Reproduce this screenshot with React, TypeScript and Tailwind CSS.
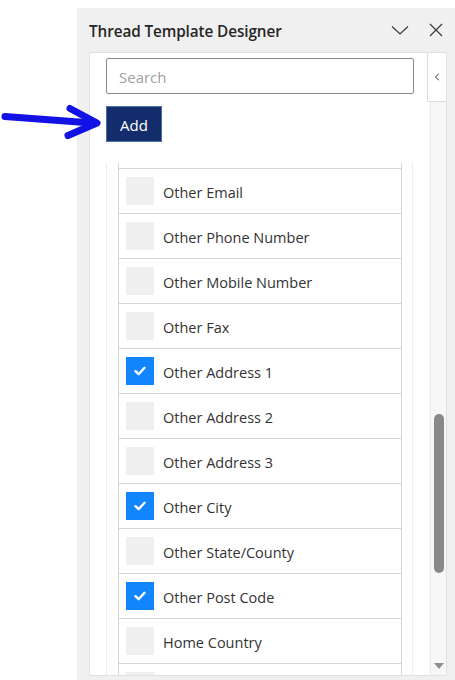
import { ChevronLeft } from "lucide-react"

const fields = [
    { label: "Other Email", checked: false },
    { label: "Other Phone Number", checked: false },
    { label: "Other Mobile Number", checked: false },
    { label: "Other Fax", checked: false },
    { label: "Other Address 1", checked: true },
    { label: "Other Address 2", checked: false },
    { label: "Other Address 3", checked: false },
    { label: "Other City", checked: true },
    { label: "Other State/County", checked: false },
    { label: "Other Post Code", checked: true },
    { label: "Home Country", checked: false },
]

const CheckBox = ({ checked }: { checked: boolean }) => (
    <div className={checked ? "w-[28px] h-[28px] bg-[#1185fc] grid place-items-center shrink-0" : "w-[28px] h-[28px] bg-[#efefef] shrink-0"}>
        {checked && (
            <svg width="12" height="10" viewBox="0 0 12 10">
                <path d="M1.5 5.2 L4.6 8.2 L10.5 1.8" fill="none" stroke="white" strokeWidth="2.4" strokeLinecap="round" strokeLinejoin="round" />
            </svg>
        )}
    </div>
)

const FieldRow = ({ label, checked }: { label?: string, checked: boolean }) => (
    <div className="h-[45px] border-b border-[#d6d6d6] flex items-center pl-[7px] gap-[9px]">
        <CheckBox checked={checked} />
        {label && <span className="pt-[3px] text-[14.5px] text-[#333333]">{label}</span>}
    </div>
)

const PointerArrow = () => (
    <svg className="absolute left-0 top-[100px]" width="110" height="46" viewBox="0 100 110 46">
        <path d="M5 116.5 L92 123" fill="none" stroke="#1212e6" strokeWidth="7" strokeLinecap="round" />
        <path d="M70 108.5 L97 123 L68 135.5" fill="none" stroke="#1212e6" strokeWidth="7" strokeLinecap="round" strokeLinejoin="round" />
    </svg>
)

export default function App() {
    return (
        <div className="relative w-[455px] h-[680px] bg-white overflow-hidden flex" style={{ fontFamily: '"Open Sans", "Noto Sans", sans-serif' }}>
            <div className="w-[77px] shrink-0" />
            <div className="flex-1 mt-[8px] bg-[#f0f0f0] flex flex-col">
                {/* header */}
                <div className="h-[44px] shrink-0 flex items-center pl-[12px] pr-[12px]">
                    <h4 className="flex-1 pt-[3px] text-[15.3px] font-semibold text-[#262626] tracking-[-0.1px]">Thread Template Designer</h4>
                    <svg className="mr-[20px]" width="18" height="10" viewBox="0 0 18 10">
                        <path d="M1 1.5 L9 9 L17 1.5" fill="none" stroke="#3a3a3a" strokeWidth="1.2" />
                    </svg>
                    <svg width="14" height="14" viewBox="0 0 14 14">
                        <path d="M1 1 L13 13 M13 1 L1 13" fill="none" stroke="#3a3a3a" strokeWidth="1.2" />
                    </svg>
                </div>

                {/* content */}
                <div className="relative ml-[12px] w-[358px] h-[624px] border border-[#e1e1e1] bg-white flex overflow-hidden">
                    <div className="w-[16px] shrink-0" />
                    <div className="w-[307px] shrink-0 flex flex-col">
                        <div className="pt-[5px] bg-white">
                            <input
                                placeholder="Search"
                                className="w-[308px] h-[36px] border border-[#8a8a8a] rounded-[2px] px-[12px] pt-[2px] text-[15px] placeholder:text-[#a0a0a0] outline-none"
                            />
                            <div className="mt-[12px] h-[57px]">
                                <button type="button" className="h-[36px] w-[56px] pt-[2px] bg-[#132c6b] border border-[#4a6fa5] text-white text-[15px]">Add</button>
                            </div>
                        </div>
                        <div className="flex-1 border-x border-[#efefef] pl-[11px] pr-[10px]">
                            <div className="border-x border-[#d6d6d6]">
                                <div className="h-[6px] border-b border-[#d6d6d6]" />
                                {fields.map((f) => (
                                    <FieldRow key={f.label} label={f.label} checked={f.checked} />
                                ))}
                                <FieldRow checked={false} />
                            </div>
                        </div>
                    </div>
                    <div className="w-[17px] shrink-0" />
                    {/* scrollbar */}
                    <div className="w-[16px] shrink-0 bg-[#f7f7f7] border-l border-[#ececec] flex flex-col items-center">
                        <div className="h-[361px] shrink-0" />
                        <div className="w-[10px] h-[159px] rounded-full bg-[#898989]" />
                        <div className="flex-1" />
                        <div className="mb-[6px] w-0 h-0 border-x-[5px] border-x-transparent border-t-[6px] border-t-[#8f8f8f]" />
                    </div>
                    {/* collapse tab */}
                    <div className="absolute right-0 top-0 w-[19px] h-[49px] bg-white border-l border-b border-[#dadada] grid place-items-center">
                        <ChevronLeft className="w-[12px] h-[12px] text-[#333]" strokeWidth={2} />
                    </div>
                </div>
            </div>
            <PointerArrow />
        </div>
    )
}
